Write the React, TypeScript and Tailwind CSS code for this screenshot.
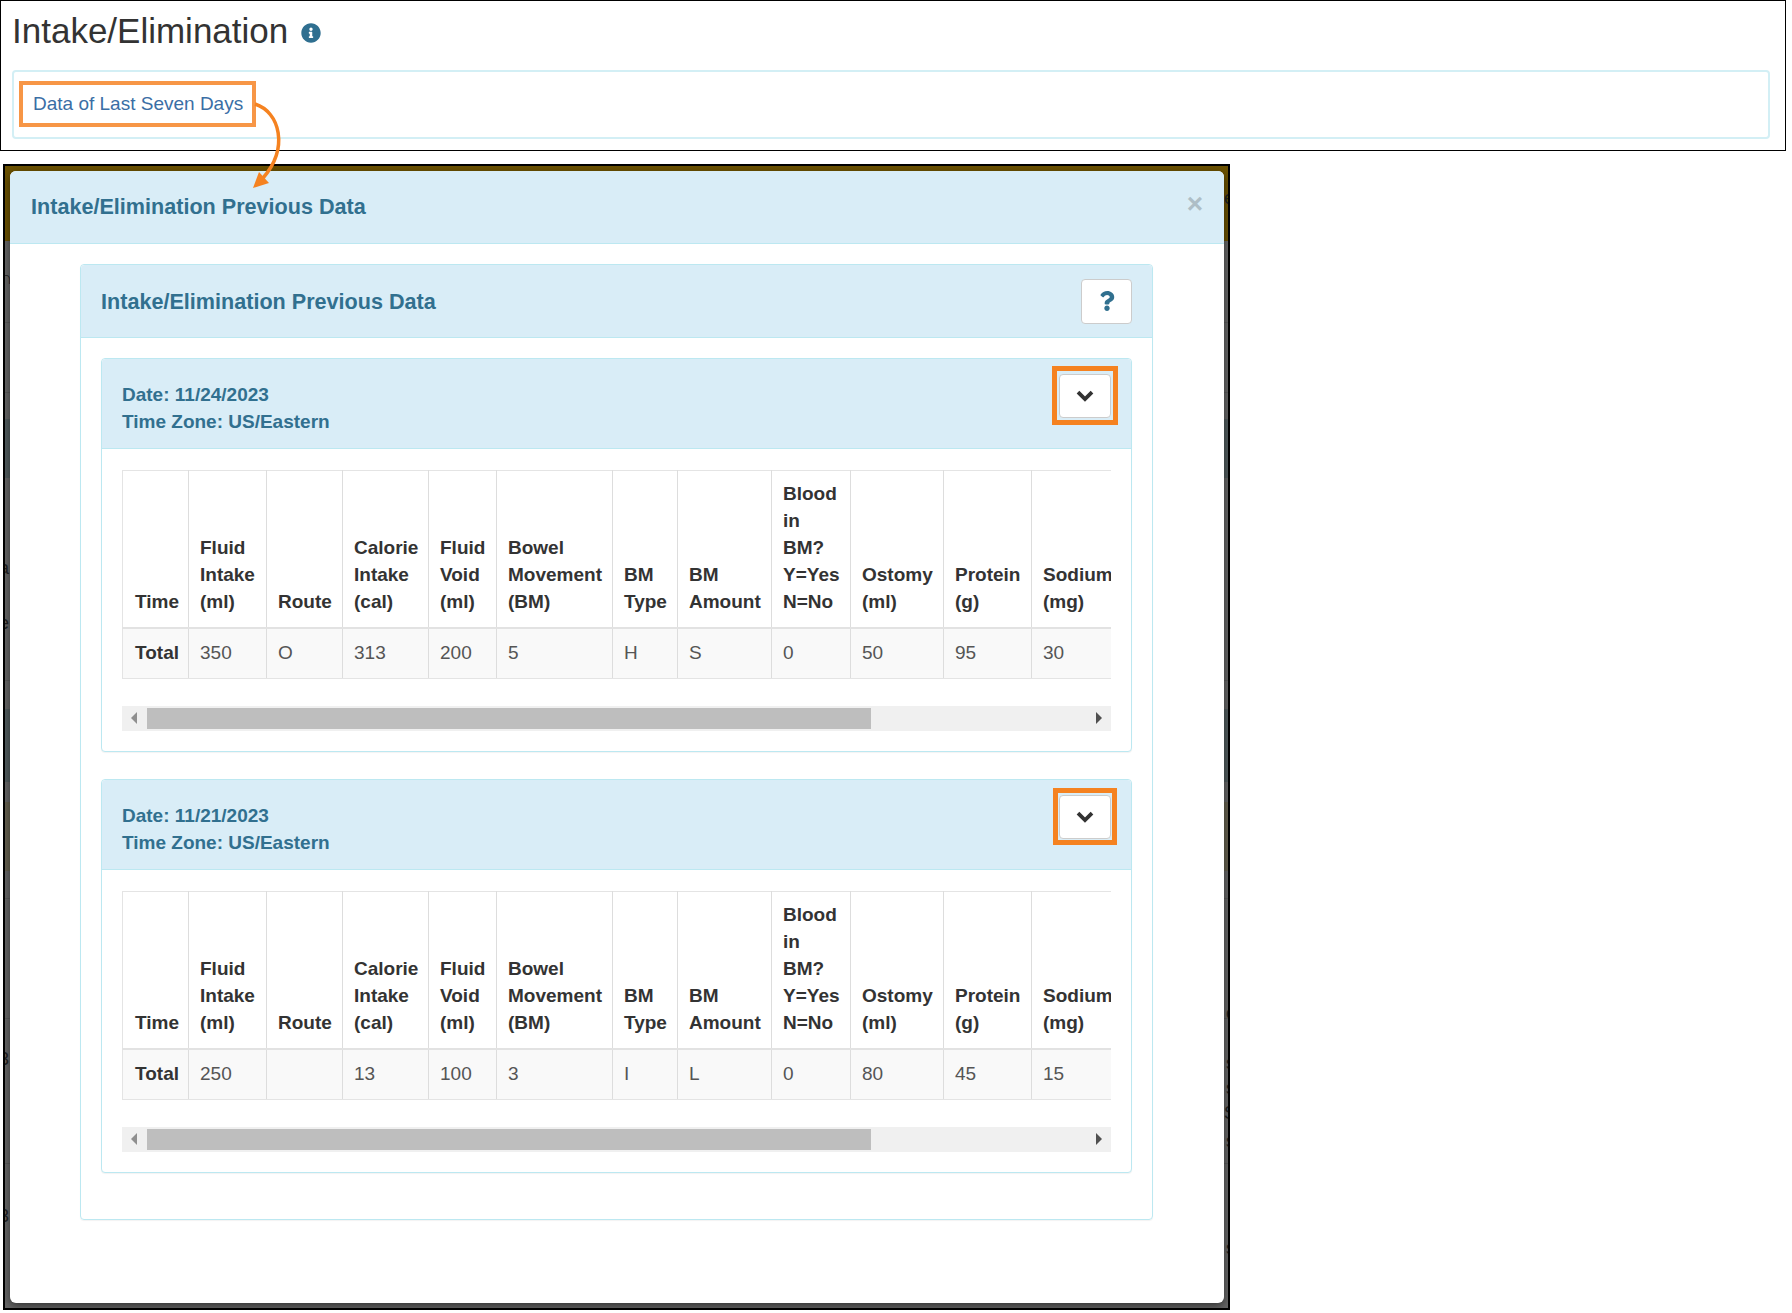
import { FaInfoCircle, FaQuestion } from "react-icons/fa";

const sans = "font-['Liberation_Sans',Arial,sans-serif]";

const HEAD = [
  { w: "w-[66px] pl-[12px]", label: "Time" },
  { w: "w-[78px] pl-[11px]", label: "Fluid Intake (ml)" },
  { w: "w-[76px] pl-[11px]", label: "Route" },
  { w: "w-[86px] pl-[11px]", label: "Calorie Intake (cal)" },
  { w: "w-[68px] pl-[11px]", label: "Fluid Void (ml)" },
  { w: "w-[116px] pl-[11px]", label: "Bowel Movement (BM)" },
  { w: "w-[65px] pl-[11px]", label: "BM Type" },
  { w: "w-[94px] pl-[11px]", label: "BM Amount" },
  { w: "w-[79px] pl-[11px]", label: "Blood in BM? Y=Yes N=No" },
  { w: "w-[93px] pl-[11px]", label: "Ostomy (ml)" },
  { w: "w-[88px] pl-[11px]", label: "Protein (g)" },
  { w: "w-[110px] pl-[11px]", label: "Sodium (mg)" },
];

function Chevron() {
  return (
    <svg width="18" height="12" viewBox="0 0 18 12" className="block">
      <path d="M2 2.2 L9 9 L16 2.2" fill="none" stroke="#333" strokeWidth="3.8" />
    </svg>
  );
}

function DataTable({ row }: { row: string[] }) {
  return (
    <div className="overflow-hidden w-[989px]">
      <table className="table-fixed border-collapse w-[1019px] border-t border-l border-[#e4e4e4]">
        <thead>
          <tr>
            {HEAD.map((h) => (
              <th
                key={h.label}
                className={`${h.w} align-bottom text-left font-bold text-[#333] pr-[9px] pt-[9px] pb-[12px] border-r border-[#ddd] border-b-2 border-b-[#e2e2e2] leading-[27px]`}
              >
                {h.label}
              </th>
            ))}
          </tr>
        </thead>
        <tbody>
          <tr className="bg-[#f9f9f9]">
            {row.map((c, i) => (
              <td
                key={i}
                className={`h-[50px] pr-[9px] pb-[2px] border-r border-[#ddd] border-b border-b-[#e4e4e4] leading-[27px] ${i === 0 ? "pl-[12px] font-bold text-[#333]" : "pl-[11px] text-[#555]"}`}
              >
                {c}
              </td>
            ))}
          </tr>
        </tbody>
      </table>
      <div className="mt-[27px] h-[25px] bg-[#f0f0f0] flex items-center">
        <div className="w-[25px] flex justify-center pr-[2px]">
          <svg width="6" height="12" viewBox="0 0 6 12"><path d="M6 0 L0 6 L6 12 Z" fill="#8f8f8f" /></svg>
        </div>
        <div className="w-[724px] h-[21px] bg-[#bebebe]" />
        <div className="flex-1 flex justify-end pr-[9px]">
          <svg width="6" height="12" viewBox="0 0 6 12"><path d="M0 0 L6 6 L0 12 Z" fill="#505050" /></svg>
        </div>
      </div>
    </div>
  );
}

function DayPanel({ date, row, second }: { date: string; row: string[]; second?: boolean }) {
  return (
    <div className={`w-[1031px] h-[394px] rounded border border-[#bce8f1] bg-white shadow-[0_1px_1px_rgba(0,0,0,0.05)] ${second ? "mt-[27px]" : ""}`}>
      <div className={`h-[90px] bg-[#d9edf7] border-b border-[#bce8f1] rounded-t flex justify-between items-start pl-[20px] ${second ? "pr-[14px]" : "pr-[13px]"}`}>
        <div className="pt-[22px] font-bold text-[#31708f] leading-[27px]">
          <div>Date: {date}</div>
          <div>Time Zone: US/Eastern</div>
        </div>
        <div className={`border-[5px] border-[#f58220] flex items-center justify-center ${second ? "mt-[8px] w-[64px] h-[57px]" : "mt-[7px] w-[66px] h-[59px]"}`}>
          <button className="w-[52px] h-[44px] bg-white border border-[#ccc] rounded flex items-center justify-center">
            <Chevron />
          </button>
        </div>
      </div>
      <div className="pt-[21px] px-[20px]">
        <DataTable row={row} />
      </div>
    </div>
  );
}

const STRAY = [
  { l: -5, t: 265, s: "∩" },
  { l: -6, t: 555, s: "a" },
  { l: -6, t: 610, s: "e" },
  { l: -6, t: 1046, s: "3" },
  { l: -6, t: 1203, s: "3" },
  { l: 1219, t: 185, s: "e" },
  { l: 1221, t: 1000, s: "e" },
  { l: 1221, t: 1050, s: "s" },
  { l: 1221, t: 1075, s: "s" },
  { l: 1219, t: 1100, s: "S" },
  { l: 1221, t: 1128, s: "s" },
  { l: 1221, t: 1235, s: "s" },
];

export default function App() {
  return (
    <div className={`relative w-[1792px] h-[1313px] bg-white overflow-hidden ${sans} text-[19px]`}>
      {/* Top crop */}
      <div className="w-[1786px] h-[151px] border border-black pt-[8px] pl-[10px] pr-[15px]">
        <div className="flex items-center h-[43px]">
          <h1 className="ml-[1px] text-[35px] leading-[43px] text-[#333] font-normal">Intake/Elimination</h1>
          <FaInfoCircle className="ml-[13px] mt-[5px] text-[#2f6f90]" size={20} />
        </div>
        <div className="mt-[18px] ml-[1px] h-[69px] rounded border-2 border-[#d3eff5] bg-white pt-[9px] pl-[5px]">
          <div className="inline-flex items-center h-[46px] w-[237px] border-4 border-[#f79646] pl-[10px] text-[#3a6ea5] whitespace-nowrap">
            Data of Last Seven Days
          </div>
        </div>
      </div>

      {/* Modal crop */}
      <div className="relative mt-[13px] ml-[3px] w-[1227px] h-[1146px] border-2 border-black bg-[#666] overflow-hidden">
        <div className="flex flex-col h-full">
          <div className="h-[75px] bg-[#6b5100]" />
          <div className="h-[82px] border-b border-[#5a5a5a]" />
          <div className="h-[70px] border-b border-[#5a5a5a]" />
          <div className="h-[26px]" />
          <div className="h-[59px] bg-[#525c5e]" />
          <div className="h-[203px] border-b border-[#5a5a5a]" />
          <div className="h-[28px]" />
          <div className="h-[73px] bg-[#525c5e]" />
          <div className="h-[20px]" />
          <div className="h-[69px] bg-[#666150]" />
          <div className="h-[28px] border-b border-[#5a5a5a]" />
          <div className="h-[120px] border-b border-[#5a5a5a]" />
          <div className="h-[145px] border-b border-[#5a5a5a]" />
        </div>
        {STRAY.map((g, i) => (
          <span key={i} className="absolute text-[#222] text-[18px] leading-[22px]" style={{ left: g.l, top: g.t - 164 }}>
            {g.s}
          </span>
        ))}

        <div className="absolute left-[5px] top-[5px] w-[1214px] h-[1132px] bg-white rounded-md shadow-[0_3px_9px_rgba(0,0,0,0.5)]">
          <div className="h-[73px] bg-[#d9edf7] border-b border-[#bce8f1] rounded-t-md flex items-center justify-between pl-[21px] pr-[21px]">
            <h4 className="text-[21.6px] font-bold text-[#31708f]">Intake/Elimination Previous Data</h4>
            <span className="text-[28px] font-bold leading-none text-[#aebec6] -mt-[7px]">×</span>
          </div>
          <div className="pt-[20px] pl-[70px]">
            <div className="w-[1073px] h-[956px] rounded border border-[#bce8f1] shadow-[0_1px_1px_rgba(0,0,0,0.05)]">
              <div className="h-[73px] bg-[#d9edf7] border-b border-[#bce8f1] rounded-t flex items-center justify-between pl-[20px] pr-[20px]">
                <h3 className="text-[21.6px] font-bold text-[#31708f] mt-[2px]">Intake/Elimination Previous Data</h3>
                <button className="w-[51px] h-[45px] bg-white border border-[#ccc] rounded flex items-center justify-center text-[#31708f]">
                  <FaQuestion size={20} />
                </button>
              </div>
              <div className="pt-[20px] pl-[20px]">
                <DayPanel date="11/24/2023" row={["Total", "350", "O", "313", "200", "5", "H", "S", "0", "50", "95", "30"]} />
                <DayPanel second date="11/21/2023" row={["Total", "250", "", "13", "100", "3", "I", "L", "0", "80", "45", "15"]} />
              </div>
            </div>
          </div>
        </div>
      </div>

      {/* Callout arrow over the two crops */}
      <svg className="absolute left-[250px] top-[100px]" width="40" height="95" viewBox="0 0 40 95" fill="none">
        <path d="M5 4 C 30 12, 39 48, 13 78" stroke="#f58220" strokeWidth="3.5" />
        <path d="M3 88 L19 83 L9 72 Z" fill="#f58220" />
      </svg>
    </div>
  );
}
